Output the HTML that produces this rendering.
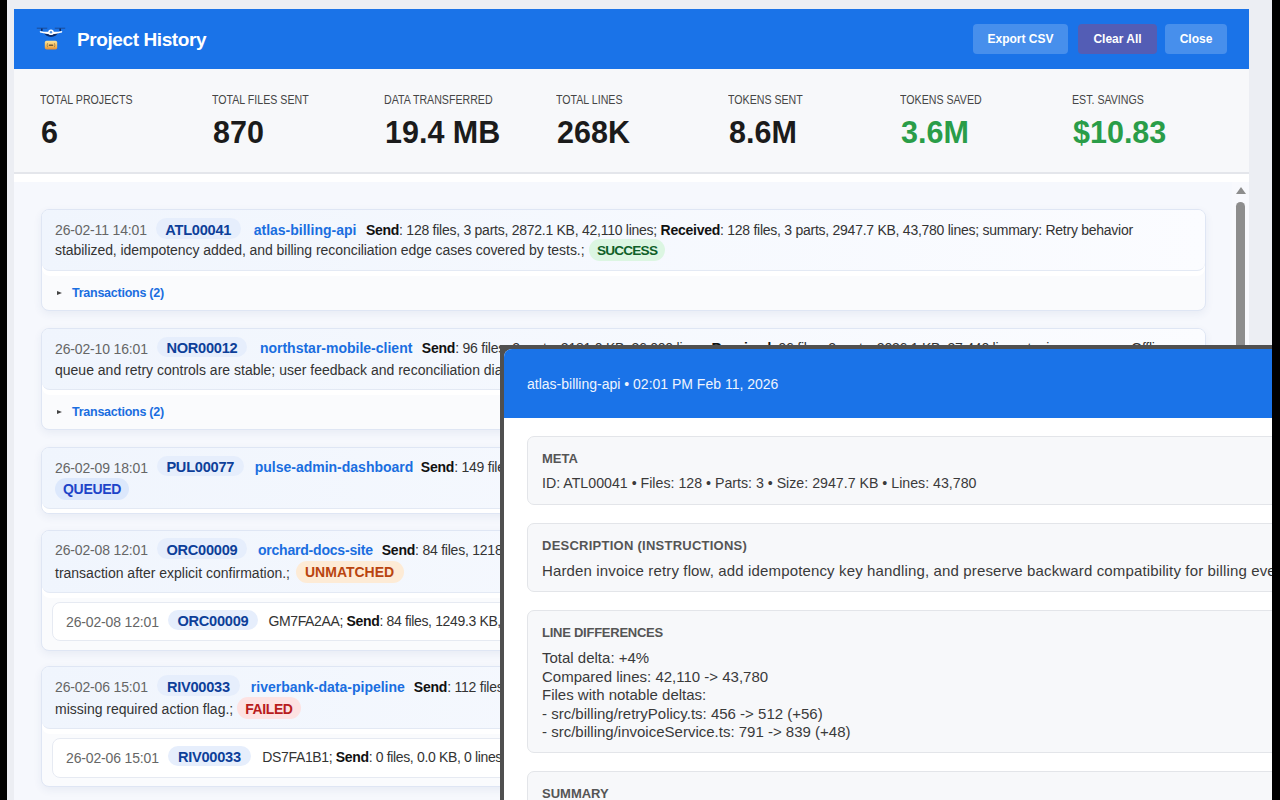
<!DOCTYPE html>
<html><head><meta charset="utf-8">
<style>
*{box-sizing:border-box;margin:0;padding:0}
html,body{width:1280px;height:800px;overflow:hidden;background:#000;font-family:"Liberation Sans",sans-serif}
.page{position:absolute;left:7px;top:0;width:1265px;height:800px;background:#eceef3}
.panel{position:absolute;left:14px;top:9px;width:1235px;height:800px;background:#fff;overflow:hidden}
.hdr{position:absolute;left:0;top:0;width:1235px;height:60px;background:#1a73e8}
.hdr .title{position:absolute;left:63px;top:20px;color:#fff;font-size:19px;font-weight:bold;letter-spacing:-0.4px;white-space:nowrap}
.btn{position:absolute;top:15px;height:30px;border-radius:4px;background:rgba(255,255,255,0.2);color:#fff;font-size:12px;font-weight:bold;text-align:center;line-height:31.5px}
.stats{position:absolute;left:0;top:60px;width:1235px;height:105px;background:#f7f8fa;border-bottom:2px solid #e4e6eb}
.stat{position:absolute;top:0}
.stat .lb{position:absolute;top:23.8px;left:0;font-size:12.5px;color:#454545;white-space:nowrap;transform-origin:0 0;transform:scaleX(0.85)}
.stat .vl{position:absolute;top:45.5px;left:1px;font-size:30.5px;font-weight:bold;color:#1b1b1b;white-space:nowrap}
.green{color:#2a9d48 !important}
.list{position:absolute;left:0;top:173px;width:1218px;height:640px;background:#f6f8fd}
.sbtrack{position:absolute;left:1218px;top:173px;width:17px;height:640px;background:#f8f9fd}
.card{position:absolute;left:27px;width:1165px;border:1px solid #dfe6f4;border-radius:8px;background:#fafbfd;box-shadow:0 3px 8px rgba(40,70,130,0.07);overflow:hidden}
.ch{background:linear-gradient(90deg,#f0f5fd,#fbfcff);border-bottom:1px solid #e3e9f4;border-radius:0 0 8px 8px;box-shadow:0 5px 0 #fff;padding:0 0 0 13px;color:#333;font-size:14px;white-space:nowrap;position:relative}
.ln{position:absolute;left:13px;white-space:nowrap}
.dt{color:#666;letter-spacing:-0.15px}
.id{display:inline-block;background:#e6eefc;color:#0d3f99;font-weight:bold;font-size:14.6px;letter-spacing:-0.25px;border-radius:11px;line-height:16px;padding:3.5px 9.5px 1px 9.5px}
.pn{color:#1a6ee0;font-weight:bold}
.b{font-weight:bold;color:#111}
.st{display:inline-block;font-weight:bold;border-radius:11px;line-height:16px;padding:3.6px 8px 2.6px 8px}
.tx{position:absolute;left:30px;color:#1a6ee0;font-size:12.5px;font-weight:bold;letter-spacing:-0.25px;white-space:nowrap}
.tri{position:absolute;left:15px;width:0;height:0;border-left:5px solid #444;border-top:2.7px solid transparent;border-bottom:2.7px solid transparent}
.sub{position:absolute;left:10px;font-size:14px;color:#333;width:1150px;background:#fff;border:1px solid #e6eaf2;border-radius:8px;height:40px}
.modal{position:absolute;left:500px;top:345px;width:772px;overflow:hidden;height:460px;background:#505050}
.mi{position:absolute;left:4px;top:4px;width:800px;height:460px;background:#fff;border-radius:8px 0 0 0;overflow:hidden}
.mh{position:absolute;left:0;top:0;width:800px;height:69.4px;background:#1a73e8;color:#eef4fe;font-size:14px}
.mp{position:absolute;left:23px;width:800px;border:1px solid #e3e5e9;border-radius:7px;background:#f7f8fa}
.mp .h{position:absolute;left:14px;font-size:13px;font-weight:bold;color:#555;white-space:nowrap}
.mp .t{position:absolute;left:14px;font-size:14px;color:#3a3a3a;white-space:nowrap}
</style></head><body>
<div class="page"></div>
<div class="panel">
  <div class="hdr">
    <svg style="position:absolute;left:20px;top:15px" width="32" height="32" viewBox="0 0 32 32">
      <defs><linearGradient id="pk" x1="0" y1="0" x2="0" y2="1"><stop offset="0" stop-color="#fde49a"/><stop offset="0.6" stop-color="#f4bd5c"/><stop offset="1" stop-color="#e68a2e"/></linearGradient></defs>
      <line x1="2.8" y1="4.2" x2="13.2" y2="4.2" stroke="#1b3d7a" stroke-width="0.7"/>
      <line x1="20.8" y1="4.2" x2="31.2" y2="4.2" stroke="#1b3d7a" stroke-width="0.7"/>
      <rect x="7" y="4.5" width="1.6" height="2.5" fill="#0b2a66"/>
      <rect x="25.4" y="4.5" width="1.6" height="2.5" fill="#0b2a66"/>
      <path d="M9.5 8.5 Q17 10 24.5 8.5 Q22 12.5 17 13 Q12 12.5 9.5 8.5 Z" fill="#0a2a6a"/>
      <path d="M5.8 6.9 Q11 8 14.5 7.8 L19.5 7.8 Q23 8 28.2 6.9 L28 8.6 Q22 10 17 10.6 Q12 10 6 8.6 Z" fill="#fff"/>
      <circle cx="17" cy="8.3" r="2.8" fill="#fff"/>
      <circle cx="17" cy="8.3" r="1.2" fill="#4f8fe0"/>
      <line x1="13" y1="13" x2="11.5" y2="17" stroke="#3d6fb8" stroke-width="0.3"/>
      <line x1="21" y1="13" x2="22.5" y2="17" stroke="#3d6fb8" stroke-width="0.3"/>
      <rect x="10.8" y="16.8" width="12.4" height="8.8" rx="1.8" fill="url(#pk)"/>
      <path d="M13.6 19.2 Q12.6 21.2 13.6 23.2" stroke="#7a6340" stroke-width="0.6" fill="none"/>
      <path d="M20.4 19.2 Q21.4 21.2 20.4 23.2" stroke="#7a6340" stroke-width="0.6" fill="none"/>
      <rect x="14.8" y="20.4" width="4.4" height="1.6" rx="0.6" fill="#6e5a3c"/>
    </svg>
    <div class="title">Project History</div>
    <div class="btn" style="left:959px;width:95px">Export CSV</div>
    <div class="btn" style="left:1064px;width:79px;background:rgba(200,50,80,0.33)">Clear All</div>
    <div class="btn" style="left:1151px;width:62px">Close</div>
  </div>
  <div class="stats">
    <div class="stat" style="left:26px"><div class="lb">TOTAL PROJECTS</div><div class="vl">6</div></div>
    <div class="stat" style="left:198px"><div class="lb">TOTAL FILES SENT</div><div class="vl">870</div></div>
    <div class="stat" style="left:370px"><div class="lb">DATA TRANSFERRED</div><div class="vl">19.4 MB</div></div>
    <div class="stat" style="left:542px"><div class="lb">TOTAL LINES</div><div class="vl">268K</div></div>
    <div class="stat" style="left:714px"><div class="lb">TOKENS SENT</div><div class="vl">8.6M</div></div>
    <div class="stat" style="left:886px"><div class="lb">TOKENS SAVED</div><div class="vl green">3.6M</div></div>
    <div class="stat" style="left:1058px"><div class="lb">EST. SAVINGS</div><div class="vl green">$10.83</div></div>
  </div>
  <div class="list">
    <!-- card 1 -->
    <div class="card" style="top:26.5px;height:102.5px">
      <div class="ch" style="height:61.5px">
        <div class="ln" style="top:8.5px"><span class="dt">26-02-11 14:01</span><span class="id" style="margin-left:9px">ATL00041</span><span class="pn" style="margin-left:13px">atlas-billing-api</span><span style="margin-left:9.5px;letter-spacing:-0.26px"><b class="b">Send</b>: 128 files, 3 parts, 2872.1 KB, 42,110 lines; <b class="b">Received</b>: 128 files, 3 parts, 2947.7 KB, 43,780 lines; summary: Retry behavior</span></div>
        <div class="ln" style="top:29.5px;letter-spacing:-0.05px">stabilized, idempotency added, and billing reconciliation edge cases covered by tests.;<span class="st" style="margin-left:4.5px;letter-spacing:normal;background:#dcf6e2;color:#0f5f28;font-size:13.6px;letter-spacing:-0.8px">SUCCESS</span></div>
      </div>
      <div class="tri" style="top:81.5px"></div>
      <div class="tx" style="top:76.5px">Transactions (2)</div>
    </div>
    <!-- card 2 -->
    <div class="card" style="top:146px;height:102.4px">
      <div class="ch" style="height:61px">
        <div class="ln" style="top:7.5px"><span class="dt">26-02-10 16:01</span><span class="id" style="margin-left:9px">NOR00012</span><span class="pn" style="margin-left:13px">northstar-mobile-client</span><span style="margin-left:9.5px;letter-spacing:-0.23px"><b class="b">Send</b>: 96 files, 2 parts, 2181.0 KB, 36,000 lines; <b class="b">Received</b>: 96 files, 2 parts, 2036.1 KB, 37,440 lines; tuning summary: Offline</span></div>
        <div class="ln" style="top:33px">queue and retry controls are stable; user feedback and reconciliation dialogs verified.;</div>
      </div>
      <div class="tri" style="top:80.5px"></div>
      <div class="tx" style="top:75.5px">Transactions (2)</div>
    </div>
    <!-- card 3 -->
    <div class="card" style="top:265px;height:66.75px">
      <div class="ch" style="height:60.5px">
        <div class="ln" style="top:7.8px"><span class="dt">26-02-09 18:01</span><span class="id" style="margin-left:9px">PUL00077</span><span class="pn" style="margin-left:11px">pulse-admin-dashboard</span><span style="margin-left:7.5px;letter-spacing:-0.23px"><b class="b">Send</b>: 149 files, 4 parts, 3310.4 KB, 51,200 lines; summary: Queued</span></div>
        <div class="ln" style="top:29.8px;left:13px;line-height:22px"><span class="st" style="background:#dce8fc;color:#1d44c8;letter-spacing:-0.3px">QUEUED</span></div>
      </div>
    </div>
    <!-- card 4 -->
    <div class="card" style="top:348px;height:120.6px">
      <div class="ch" style="height:61.5px">
        <div class="ln" style="top:7px"><span class="dt">26-02-08 12:01</span><span class="id" style="margin-left:9px">ORC00009</span><span class="pn" style="margin-left:11px;letter-spacing:-0.2px">orchard-docs-site</span><span style="margin-left:9px;letter-spacing:-0.23px"><b class="b">Send</b>: 84 files, 1218.4 KB, 18,240 lines; summary: Docs sync skipped</span></div>
        <div class="ln" style="top:29.8px">transaction after explicit confirmation.;<span class="st" style="margin-left:5.5px;padding:3.6px 9.5px 2.6px 9.5px;background:#fdebd6;color:#b9440f">UNMATCHED</span></div>
      </div>
      <div class="sub" style="top:70.5px;height:39.5px">
        <div class="ln" style="top:7.1px;left:13px"><span class="dt">26-02-08 12:01</span><span class="id" style="margin-left:9px">ORC00009</span><span style="margin-left:10.5px;letter-spacing:-0.35px">GM7FA2AA; <b class="b">Send</b>: 84 files, 1249.3 KB, 18,240 lines;</span></div>
      </div>
    </div>
    <!-- card 5 -->
    <div class="card" style="top:484px;height:121px">
      <div class="ch" style="height:61.5px">
        <div class="ln" style="top:8px"><span class="dt">26-02-06 15:01</span><span class="id" style="margin-left:9px;padding:3.5px 10px 1px 10px">RIV00033</span><span class="pn" style="margin-left:11px">riverbank-data-pipeline</span><span style="margin-left:9px;letter-spacing:-0.23px"><b class="b">Send</b>: 112 files, 2 parts, 2410.0 KB, 28,900 lines; summary: Validation failed,</span></div>
        <div class="ln" style="top:30px">missing required action flag.;<span class="st" style="margin-left:4px;letter-spacing:-0.4px;background:#fde2e2;color:#b81c1c">FAILED</span></div>
      </div>
      <div class="sub" style="top:70.5px;height:40.5px">
        <div class="ln" style="top:7.1px;left:13px"><span class="dt">26-02-06 15:01</span><span class="id" style="margin-left:9px;padding:3.5px 10px 1px 10px">RIV00033</span><span style="margin-left:11.5px;letter-spacing:-0.35px">DS7FA1B1; <b class="b">Send</b>: 0 files, 0.0 KB, 0 lines;</span></div>
      </div>
    </div>
  </div>
  <div class="sbtrack">
    <div style="position:absolute;left:3.5px;top:5px;width:0;height:0;border-left:5px solid transparent;border-right:5px solid transparent;border-bottom:7px solid #8d8d8d"></div>
    <div style="position:absolute;left:4px;top:20px;width:9px;height:400px;border-radius:5px;background:#8d8d8d"></div>
  </div>
</div>
<div class="modal">
  <div class="mi">
    <div class="mh"><div style="position:absolute;left:23px;top:27px;white-space:nowrap">atlas-billing-api • 02:01 PM Feb 11, 2026</div></div>
    <div class="mp" style="top:87px;height:69px">
      <div class="h" style="top:13.8px">META</div>
      <div class="t" style="top:38px;font-size:14.2px">ID: ATL00041 • Files: 128 • Parts: 3 • Size: 2947.7 KB • Lines: 43,780</div>
    </div>
    <div class="mp" style="top:174px;height:69px">
      <div class="h" style="top:13.8px;letter-spacing:0.25px">DESCRIPTION (INSTRUCTIONS)</div>
      <div class="t" style="top:38px;font-size:15px;letter-spacing:0.14px">Harden invoice retry flow, add idempotency key handling, and preserve backward compatibility for billing events.</div>
    </div>
    <div class="mp" style="top:261px;height:143px">
      <div class="h" style="top:13.8px;letter-spacing:-0.25px">LINE DIFFERENCES</div>
      <div class="t" style="top:38px;font-size:15px;line-height:18.6px;white-space:pre">Total delta: +4%
Compared lines: 42,110 -&gt; 43,780
Files with notable deltas:
- src/billing/retryPolicy.ts: 456 -&gt; 512 (+56)
- src/billing/invoiceService.ts: 791 -&gt; 839 (+48)</div>
    </div>
    <div class="mp" style="top:422px;height:143px">
      <div class="h" style="top:13.8px">SUMMARY</div>
    </div>
  </div>
</div>
</body></html>
